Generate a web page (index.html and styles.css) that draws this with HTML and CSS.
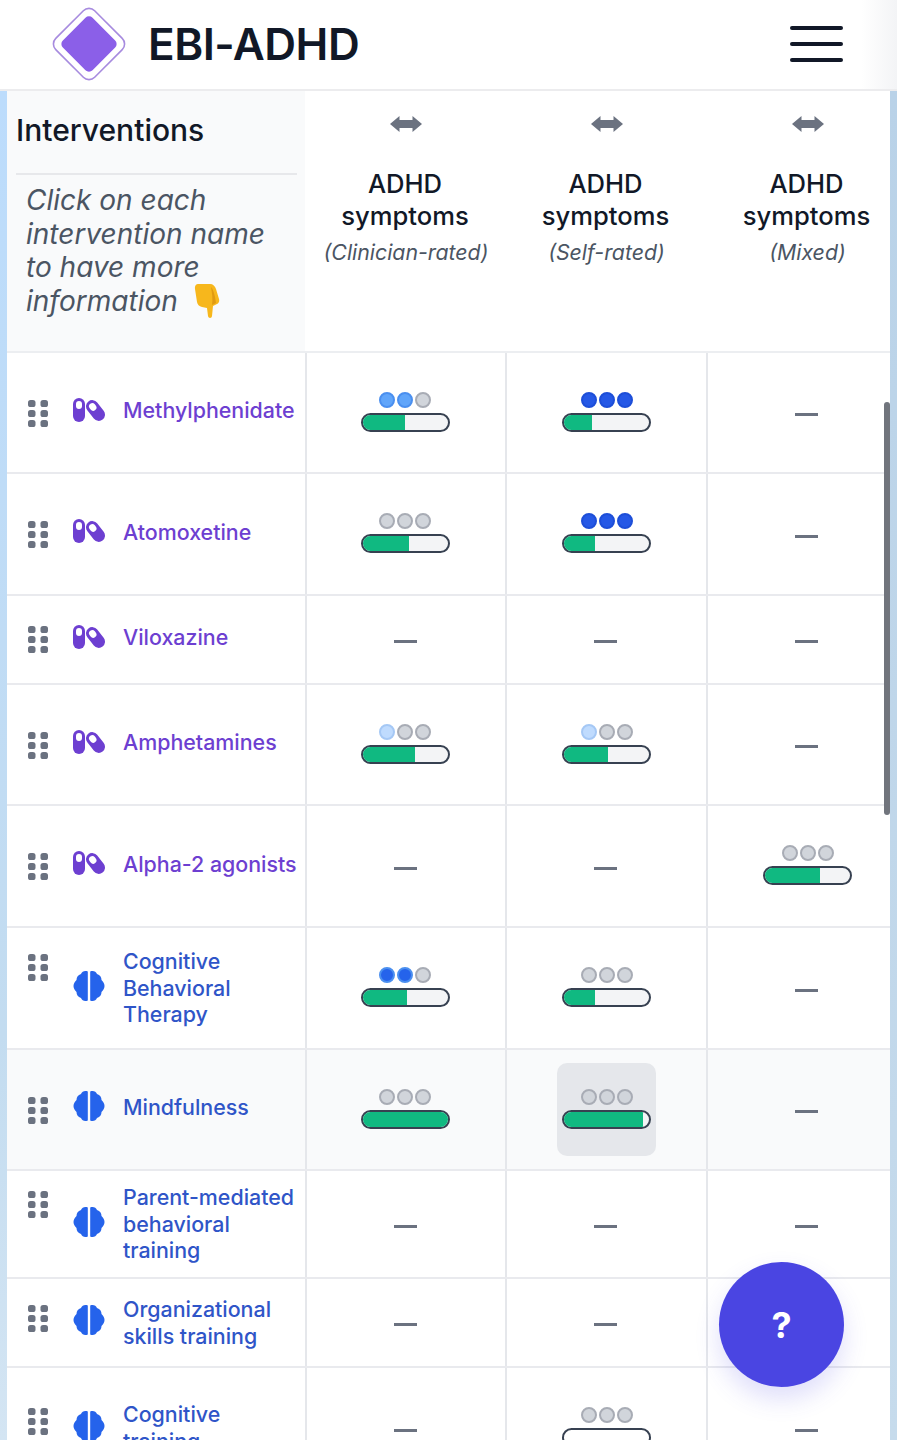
FILE: index.html
```html
<!DOCTYPE html>
<html lang="en">
<head>
<meta charset="utf-8">
<title>EBI-ADHD</title>
<link rel="stylesheet" href="styles.css">
</head>
<body>
<svg class="defs" width="0" height="0" aria-hidden="true">
  <symbol id="grip" viewBox="0 0 20 27">
    <rect x="0" y="0" width="7.5" height="7" rx="2.6"/><rect x="12.5" y="0" width="7.5" height="7" rx="2.6"/>
    <rect x="0" y="10" width="7.5" height="7" rx="2.6"/><rect x="12.5" y="10" width="7.5" height="7" rx="2.6"/>
    <rect x="0" y="20" width="7.5" height="7" rx="2.6"/><rect x="12.5" y="20" width="7.5" height="7" rx="2.6"/>
  </symbol>
  <symbol id="pill" viewBox="0 0 32 24">
    <rect x="0" y="0" width="12" height="24" rx="6"/>
    <rect class="pill-window" x="3" y="3" width="6" height="8" rx="3"/>
    <g transform="translate(22.500 12.500) rotate(-38)">
      <rect x="-6.250" y="-11.500" width="12.500" height="23" rx="6.250"/>
      <rect class="pill-window" x="-3.250" y="-8.500" width="6.500" height="8" rx="3.250"/>
    </g>
  </symbol>
  <symbol id="brain" viewBox="0 0 32 32">
    <path d="M14.800 1.500C12 .3 9 1.300 8 4 5 5 3.500 7 3.500 10 1.500 12 .5 14 .5 16c0 2 1 4 3 6 0 3 1.500 5 4.500 6 1 2.700 4 3.700 6.800 2.500z"/>
    <path d="M17.200 1.500C20 .3 23 1.300 24 4c3 1 4.500 3 4.500 6 2 2 3 4 3 6s-1 4-3 6c0 3-1.500 5-4.500 6-1 2.700-4 3.700-6.800 2.500z"/>
  </symbol>
  <symbol id="arrows" viewBox="0 0 32 16">
    <path d="M0 8 9.500 0v4h13V0L32 8l-9.500 8v-4h-13v4z"/>
  </symbol>
</svg>

<div class="app">
  <header class="topbar">
    <div class="brand">
      <svg class="logo" viewBox="0 0 74 74" aria-hidden="true">
        <rect class="logo-frame" x="9.500" y="9.500" width="55" height="55" rx="8" transform="rotate(45 37 37)"/>
        <rect class="logo-core" x="16" y="16" width="42" height="42" rx="5" transform="rotate(45 37 37)"/>
      </svg>
      <span class="brand-name">EBI-ADHD</span>
    </div>
    <button class="menu" aria-label="Menu"><span></span><span></span><span></span></button>
  </header>

  <div class="stage">
    <div class="edge edge-left"></div>
    <div class="table-clip">
      <div class="table">
        <div class="row row-head">
          <div class="head-main">
            <div class="head-title">Interventions</div>
            <p class="head-note">Click on each intervention name to have more information <svg class="hand" viewBox="0 0 26 35" aria-hidden="true"><path d="M4 1h12c3 0 5 2 6 5l3 10c.6 2 0 4-2 5l-4 2-1 10c-.2 2.500-3.600 2.500-4 0l-1-8-5-1c-3-.6-4.500-2.500-5-5L1 6c-.5-3 1-5 3-5z"/><path class="hand-shade" d="M17 4c2 2 3 6 4 10l1 6-4 2c1-6 0-12-1-18z"/></svg></p>
          </div>
          <div class="head-col">
            <svg class="arrows"><use href="#arrows"/></svg>
            <div class="col-title">ADHD symptoms</div>
            <div class="col-sub">(Clinician-rated)</div>
          </div>
          <div class="head-col">
            <svg class="arrows"><use href="#arrows"/></svg>
            <div class="col-title">ADHD symptoms</div>
            <div class="col-sub">(Self-rated)</div>
          </div>
          <div class="head-col">
            <svg class="arrows"><use href="#arrows"/></svg>
            <div class="col-title">ADHD symptoms</div>
            <div class="col-sub">(Mixed)</div>
          </div>
        </div>

        <div class="row row-tall trim">
          <div class="label drug"><svg class="grip"><use href="#grip"/></svg><svg class="kind pill"><use href="#pill"/></svg><a class="name">Methylphenidate</a></div>
          <div class="cell"><div class="rating"><div class="dots"><i class="dot mid"></i><i class="dot mid"></i><i class="dot off"></i></div><div class="bar"><div class="fill" style="width:50%"></div></div></div></div>
          <div class="cell"><div class="rating"><div class="dots"><i class="dot high"></i><i class="dot high"></i><i class="dot high"></i></div><div class="bar"><div class="fill" style="width:33%"></div></div></div></div>
          <div class="cell"><span class="dash"></span></div>
        </div>

        <div class="row row-tall">
          <div class="label drug"><svg class="grip"><use href="#grip"/></svg><svg class="kind pill"><use href="#pill"/></svg><a class="name">Atomoxetine</a></div>
          <div class="cell"><div class="rating"><div class="dots"><i class="dot off"></i><i class="dot off"></i><i class="dot off"></i></div><div class="bar"><div class="fill" style="width:55%"></div></div></div></div>
          <div class="cell"><div class="rating"><div class="dots"><i class="dot high"></i><i class="dot high"></i><i class="dot high"></i></div><div class="bar"><div class="fill" style="width:37%"></div></div></div></div>
          <div class="cell"><span class="dash"></span></div>
        </div>

        <div class="row row-short">
          <div class="label drug"><svg class="grip"><use href="#grip"/></svg><svg class="kind pill"><use href="#pill"/></svg><a class="name">Viloxazine</a></div>
          <div class="cell"><span class="dash"></span></div>
          <div class="cell"><span class="dash"></span></div>
          <div class="cell"><span class="dash"></span></div>
        </div>

        <div class="row row-tall trim">
          <div class="label drug"><svg class="grip"><use href="#grip"/></svg><svg class="kind pill"><use href="#pill"/></svg><a class="name">Amphetamines</a></div>
          <div class="cell"><div class="rating"><div class="dots"><i class="dot low"></i><i class="dot off"></i><i class="dot off"></i></div><div class="bar"><div class="fill" style="width:62%"></div></div></div></div>
          <div class="cell"><div class="rating"><div class="dots"><i class="dot low"></i><i class="dot off"></i><i class="dot off"></i></div><div class="bar"><div class="fill" style="width:52%"></div></div></div></div>
          <div class="cell"><span class="dash"></span></div>
        </div>

        <div class="row row-tall">
          <div class="label drug"><svg class="grip"><use href="#grip"/></svg><svg class="kind pill"><use href="#pill"/></svg><a class="name">Alpha-2 agonists</a></div>
          <div class="cell"><span class="dash"></span></div>
          <div class="cell"><span class="dash"></span></div>
          <div class="cell"><div class="rating"><div class="dots"><i class="dot off"></i><i class="dot off"></i><i class="dot off"></i></div><div class="bar"><div class="fill" style="width:65%"></div></div></div></div>
        </div>

        <div class="row row-tall">
          <div class="label psych multi"><svg class="grip"><use href="#grip"/></svg><svg class="kind brain"><use href="#brain"/></svg><a class="name">Cognitive Behavioral Therapy</a></div>
          <div class="cell"><div class="rating"><div class="dots"><i class="dot mid2"></i><i class="dot mid2"></i><i class="dot off"></i></div><div class="bar"><div class="fill" style="width:52%"></div></div></div></div>
          <div class="cell"><div class="rating"><div class="dots"><i class="dot off"></i><i class="dot off"></i><i class="dot off"></i></div><div class="bar"><div class="fill" style="width:37%"></div></div></div></div>
          <div class="cell"><span class="dash"></span></div>
        </div>

        <div class="row row-tall trim row-hover">
          <div class="label psych"><svg class="grip"><use href="#grip"/></svg><svg class="kind brain"><use href="#brain"/></svg><a class="name">Mindfulness</a></div>
          <div class="cell"><div class="rating"><div class="dots"><i class="dot off"></i><i class="dot off"></i><i class="dot off"></i></div><div class="bar"><div class="fill" style="width:100%"></div></div></div></div>
          <div class="cell"><div class="rating rating-active"><div class="dots"><i class="dot off"></i><i class="dot off"></i><i class="dot off"></i></div><div class="bar"><div class="fill" style="width:93%"></div></div></div></div>
          <div class="cell"><span class="dash"></span></div>
        </div>

        <div class="row row-mid">
          <div class="label psych multi"><svg class="grip"><use href="#grip"/></svg><svg class="kind brain"><use href="#brain"/></svg><a class="name">Parent-mediated behavioral training</a></div>
          <div class="cell"><span class="dash"></span></div>
          <div class="cell"><span class="dash"></span></div>
          <div class="cell"><span class="dash"></span></div>
        </div>

        <div class="row row-short">
          <div class="label psych multi"><svg class="grip"><use href="#grip"/></svg><svg class="kind brain"><use href="#brain"/></svg><a class="name">Organizational skills training</a></div>
          <div class="cell"><span class="dash"></span></div>
          <div class="cell"><span class="dash"></span></div>
          <div class="cell"><span class="dash"></span></div>
        </div>

        <div class="row row-tall">
          <div class="label psych multi far"><svg class="grip"><use href="#grip"/></svg><svg class="kind brain"><use href="#brain"/></svg><a class="name">Cognitive training</a></div>
          <div class="cell"><span class="dash"></span></div>
          <div class="cell"><div class="rating"><div class="dots"><i class="dot off"></i><i class="dot off"></i><i class="dot off"></i></div><div class="bar bar-plain"></div></div></div>
          <div class="cell"><span class="dash"></span></div>
        </div>
      </div>
    </div>
    <div class="edge edge-right"></div>
    <div class="scroll-thumb"></div>
  </div>

  <button class="help" aria-label="Help">?</button>
</div>
</body>
</html>
```

FILE: styles.css
```css
* { box-sizing: border-box; }
html, body { margin: 0; padding: 0; background: #fff; }
body { font-family: "Inter", "Noto Sans", sans-serif; color: #111827; }
.defs { position: absolute; }

.app { position: relative; width: 897px; height: 1440px; overflow: hidden; display: flex; flex-direction: column; }

.topbar { flex: none; height: 91px; display: flex; align-items: center; justify-content: space-between; padding: 0 54px 2px 52px; border-bottom: 2px solid #ececee; background: linear-gradient(90deg, #fff 96%, #f3f4f6 100%); }
.brand { display: flex; align-items: center; gap: 22px; }
.logo { width: 74px; height: 74px; }
.logo-frame { fill: #fff; stroke: #a78bdf; stroke-width: 1.6; }
.logo-core { fill: #8b5fe8; }
.brand-name { font-size: 44px; font-weight: 600; letter-spacing: -0.5px; color: #111827; line-height: 1; }
.menu { width: 53px; height: 36px; padding: 0; border: 0; background: none; display: flex; flex-direction: column; justify-content: space-between; }
.menu span { display: block; height: 4px; border-radius: 2px; background: #111827; }

.stage { position: relative; flex: 1; min-height: 0; display: flex; }
.edge { flex: none; height: 100%; }
.edge-left { width: 7px; background: linear-gradient(180deg, #bcdcfc 0%, #c3dcf0 70%, #d4e5f3 100%); }
.edge-right { width: 7px; background: linear-gradient(180deg, #b9d2e8 0%, #c6dbec 100%); }
.table-clip { flex: 1; min-width: 0; overflow: hidden; position: relative; }
.table { width: 900px; display: flex; flex-direction: column; }

.row { flex: none; display: grid; grid-template-columns: 298px 200px 201px 201px; border-bottom: 2px solid #e9eaee; }
.row-head { height: 262px; border-bottom-color: #eceef1; }
.row-tall { height: 122px; }
.row-tall.trim { height: 121px; }
.row-short { height: 89px; }
.row-mid { height: 108px; }
.row-hover { background: #f9fafb; }

.head-main { background: #f9fafb; padding: 21px 8px 0 9px; }
.head-title { font-size: 30px; font-weight: 500; line-height: 36px; color: #111827; padding-bottom: 25px; border-bottom: 2px solid #e7e8eb; }
.head-note { margin: 9px 12px 0 10px; font-size: 28px; line-height: 33.500px; font-style: italic; color: #4b5563; }
.hand { width: 26px; height: 35px; fill: #f7b71c; vertical-align: 1px; margin: -8px 0 -8px 8px; }
.hand-shade { fill: #e09a12; }

.head-col { display: flex; flex-direction: column; align-items: center; padding-top: 25px; text-align: center; }
.arrows { width: 32px; height: 16px; fill: #6b7280; flex: none; margin: 0 0 36px 2px; }
.col-title { font-size: 25.600px; font-weight: 500; line-height: 32px; width: 160px; color: #111827; }
.col-sub { font-size: 21.300px; line-height: 28px; margin: 6px 0 0 2px; font-style: italic; color: #4b5563; white-space: nowrap; }

.label { display: flex; align-items: center; padding: 0 0 4px 21px; }
.multi { padding-bottom: 0; }
.grip { flex: none; width: 20px; height: 27px; fill: #6b7280; align-self: flex-start; margin-top: 46.500px; }
.kind { flex: none; margin-left: 25px; margin-bottom: 2px; }
.multi .kind { margin-bottom: 5px; }
.psych:not(.multi) .kind { margin-bottom: 4px; }
.pill { width: 32px; height: 24px; }
.pill-window { fill: #fff; }
.brain { width: 32px; height: 32px; }
.name { margin-left: 18px; font-size: 21.400px; line-height: 26.700px; font-weight: 500; }
.far .name { width: 140px; }
.drug .kind, .drug .name { color: #6d3fd1; fill: #6d3fd1; }
.psych .kind { fill: #2563eb; }
.psych .name { color: #2f55c8; }
.row-short .grip { margin-top: 30px; }
.multi .grip { margin-top: 25.500px; }
.row-mid .multi .grip { margin-top: 19.500px; }
.row-short .multi .grip { margin-top: 25.500px; }
.multi.far .grip { margin-top: 39.500px; }

.cell { display: flex; align-items: center; justify-content: center; border-left: 2px solid #e5e7eb; }
.dash { display: block; width: 23px; height: 3px; margin: 4px 0 0 -2px; background: #6b7280; }
.rating { display: flex; flex-direction: column; align-items: center; gap: 5px; padding: 0; margin-bottom: 2px; }
.cell:nth-child(2) .rating { margin-left: -2px; }
.rating-active { background: #e5e7eb; border-radius: 10px; padding: 26px 5px 27px; margin-bottom: 0; }
.dots { display: flex; gap: 2px; }
.dot { display: block; width: 16px; height: 16px; border-radius: 50%; border: 2px solid; }
.off { background: #d1d5db; border-color: #a8acb5; }
.mid { background: #60a5fa; border-color: #4a8fef; }
.mid2 { background: #2563eb; border-color: #4a8fef; }
.high { background: #2558e6; border-color: #1d4ed8; }
.low { background: #bfdbfe; border-color: #a5c8f5; }
.bar { width: 89px; height: 19px; border: 2.500px solid #374151; border-radius: 10px; background: #f3f4f6; overflow: hidden; }
.bar-plain { background: #fff; }
.fill { height: 100%; background: #10b981; }

.scroll-thumb { position: absolute; left: 884px; top: 311px; width: 6px; height: 413px; border-radius: 3px; background: #71757d; }

.help { position: absolute; left: 719px; top: 1262px; width: 125px; height: 125px; border: 0; border-radius: 50%; background: #4a45e2; color: #fff; font-family: "Inter", sans-serif; font-size: 36px; font-weight: 700; box-shadow: 0 12px 24px rgba(79, 70, 229, 0.18); }
```
